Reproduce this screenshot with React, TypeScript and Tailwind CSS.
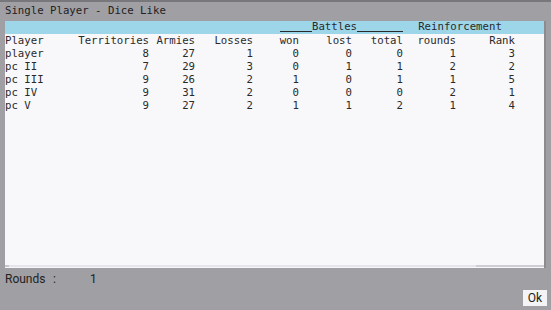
const rows = [
  ["player", "8", "27", "1", "0", "0", "0", "1", "3"],
  ["pc II", "7", "29", "3", "0", "1", "1", "2", "2"],
  ["pc III", "9", "26", "2", "1", "0", "1", "1", "5"],
  ["pc IV", "9", "31", "2", "0", "0", "0", "2", "1"],
  ["pc V", "9", "27", "2", "1", "1", "2", "1", "4"],
];

const header = ["Player", "Territories", "Armies", "Losses", "won", "lost", "total", "rounds", "Rank"];

const cols = "grid grid-cols-[73px_71px_46px_58px_46px_53px_51px_53px_59px]";

function Row({ cells }: { cells: string[] }) {
  return (
    <div className={`${cols} h-[13px] leading-[13px]`}>
      {cells.map((c, i) => (
        <span key={i} className={`whitespace-pre ${i === 0 ? "text-left" : "text-right"}`}>
          {c}
        </span>
      ))}
    </div>
  );
}

export default function App() {
  return (
    <div className="w-[551px] h-[310px] bg-[#a09fa4] border-t-2 border-[#78777b] flex flex-col overflow-hidden">
      <div className="h-[19px] pl-[5px] pt-[2px] text-[10.7px] leading-[13px] text-[#222] font-['DejaVu_Sans_Mono',monospace]">
        Single Player - Dice Like
      </div>

      <div className="ml-[5px] mr-[5px] h-[247px] bg-[#f8f8fa] border-r-2 border-[#8c8b90] flex flex-col font-['DejaVu_Sans_Mono',monospace] text-[10.7px] text-[#2a2a2a]">
        <div className={`${cols} h-[13px] leading-[12px] bg-[#9dd5e9]`}>
          <div className="col-start-5 col-span-3 flex justify-end items-start">
            <span className="w-[32px] h-[11px] border-b border-[#2a2a2a]" />
            <span>Battles</span>
            <span className="w-[46px] h-[11px] border-b border-[#2a2a2a]" />
          </div>
          <span className="col-span-2 text-center whitespace-pre pl-[2px]">Reinforcement</span>
        </div>
        <div>
          <Row cells={header} />
          {rows.map((r, i) => (
            <Row key={i} cells={r} />
          ))}
        </div>
        <div className="mt-auto mb-[1px] h-[2px] bg-[#e6e6ea] flex">
          <div className="w-[4px] bg-[#c8c8cc]" />
          <div className="flex-1" />
          <div className="w-[68px] bg-[#cfcfd3]" />
        </div>
      </div>

      <div className="flex items-center h-[22px] pl-[5px] font-['Roboto',sans-serif] text-[12px] text-[#222]">
        <span className="w-[48px]">Rounds</span>
        <span className="w-[37px]">:</span>
        <span>1</span>
      </div>

      <div className="flex justify-end pr-[4px]">
        <button className="w-[24px] h-[16px] bg-[#f4f4f6] font-['Roboto',sans-serif] text-[12px] leading-[16px] text-[#222]">
          Ok
        </button>
      </div>
    </div>
  );
}
